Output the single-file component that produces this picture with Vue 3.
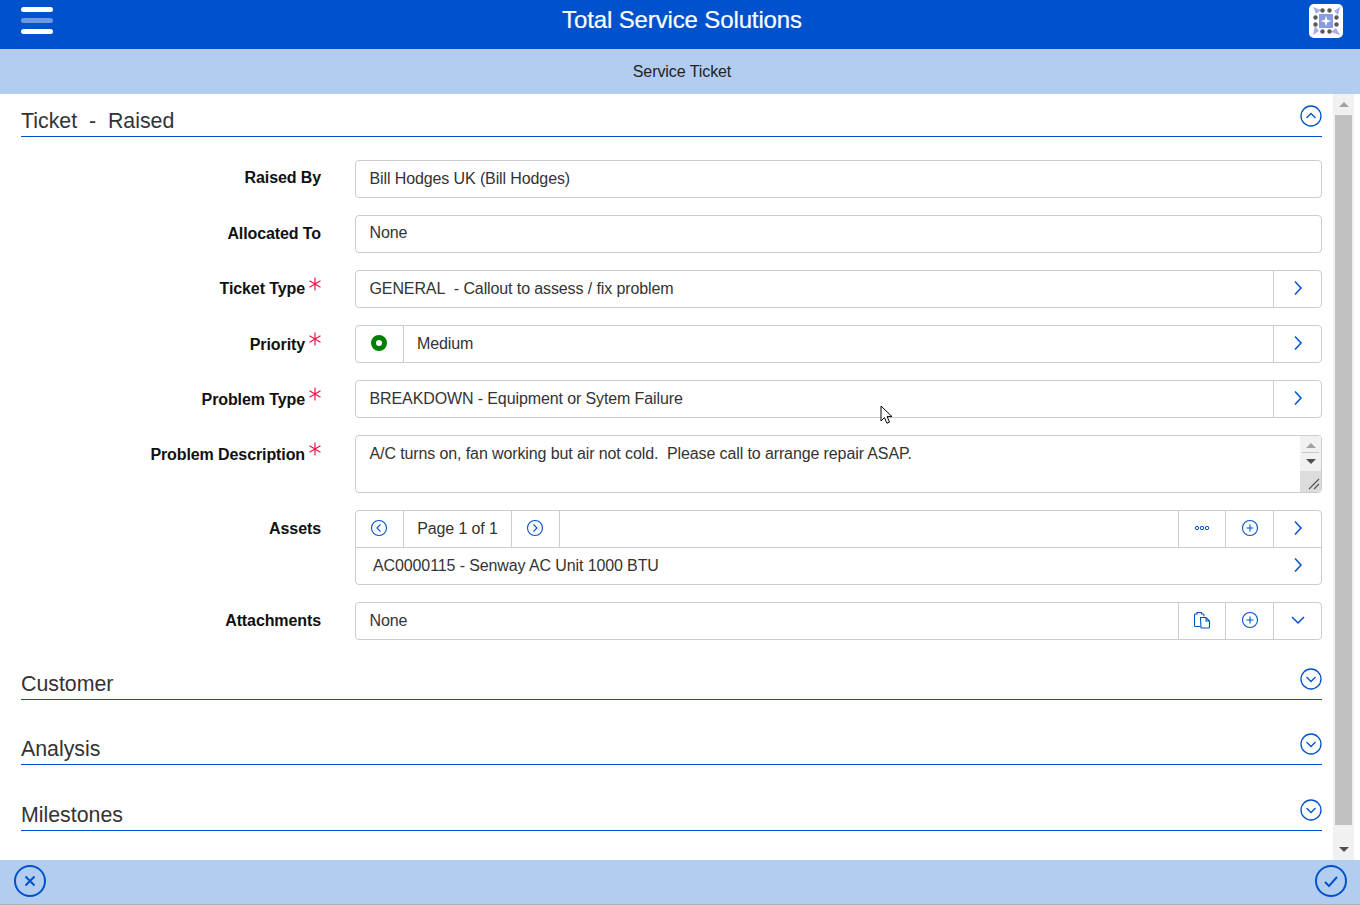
<script setup>
const sections = ['Customer', 'Analysis', 'Milestones']
</script>

<template>
  <div class="app">
    <header class="topbar">
      <div class="burger"><span></span><span class="dim"></span><span></span></div>
      <h1 class="brand">Total Service Solutions</h1>
      <div class="logo">
        <svg width="34" height="34" viewBox="0 0 34 34">
          <path d="M4 3l8 3-5 4zM31 3l-2 8-4-4zM31 31l-9-3 5-4zM4 31l2-9 4 5z" fill="#a3afe8" />
          <rect x="10" y="10" width="14" height="14" fill="#8b9be0" />
          <path d="M17 11.500l1.200 4.300 4.300 1.200-4.300 1.200-1.200 4.300-1.200-4.300-4.300-1.200 4.300-1.200z" fill="#fff" />
          <g fill="#5a5a5a">
            <circle cx="13.500" cy="6.500" r="2.200" /><circle cx="20.500" cy="6.500" r="2.200" />
            <circle cx="13.500" cy="27.500" r="2.200" /><circle cx="20.500" cy="27.500" r="2.200" />
            <circle cx="6.500" cy="13.500" r="2.200" /><circle cx="6.500" cy="20.500" r="2.200" />
            <circle cx="27.500" cy="13.500" r="2.200" /><circle cx="27.500" cy="20.500" r="2.200" />
          </g>
        </svg>
      </div>
    </header>
    <div class="subbar">Service Ticket</div>

    <main class="middle">
      <div class="content">
        <section class="section">
          <div class="head">
            <h2>Ticket&nbsp; -&nbsp; Raised</h2>
            <svg class="head-icon" width="22" height="22" viewBox="0 0 22 22"><circle cx="11" cy="11" r="10" /><path d="M6.500 13l4.500-4.500 4.500 4.500" /></svg>
          </div>
          <div class="form">
            <label class="label">Raised By</label>
            <div class="field"><div class="text">Bill Hodges UK (Bill Hodges)</div></div>

            <label class="label l1">Allocated To</label>
            <div class="field"><div class="text up">None</div></div>

            <label class="label l1 req">Ticket Type<svg class="star" width="14" height="14" viewBox="0 0 14 14"><path d="M7 .5v13M1.500 3.800l11 6.400M12.500 3.800l-11 6.400" /></svg></label>
            <div class="field">
              <div class="text">GENERAL&nbsp; - Callout to assess / fix problem</div>
              <div class="cell chev"><svg width="12" height="16" viewBox="0 0 12 16"><path d="M3 1.500l6 6.500-6 6.500" /></svg></div>
            </div>

            <label class="label l2 req">Priority<svg class="star" width="14" height="14" viewBox="0 0 14 14"><path d="M7 .5v13M1.500 3.800l11 6.400M12.500 3.800l-11 6.400" /></svg></label>
            <div class="field">
              <div class="cell dot"><i></i></div>
              <div class="text med">Medium</div>
              <div class="cell chev"><svg width="12" height="16" viewBox="0 0 12 16"><path d="M3 1.500l6 6.500-6 6.500" /></svg></div>
            </div>

            <label class="label l2 req">Problem Type<svg class="star" width="14" height="14" viewBox="0 0 14 14"><path d="M7 .5v13M1.500 3.800l11 6.400M12.500 3.800l-11 6.400" /></svg></label>
            <div class="field">
              <div class="text">BREAKDOWN - Equipment or Sytem Failure</div>
              <div class="cell chev"><svg width="12" height="16" viewBox="0 0 12 16"><path d="M3 1.500l6 6.500-6 6.500" /></svg></div>
            </div>

            <label class="label l2 req">Problem Description<svg class="star" width="14" height="14" viewBox="0 0 14 14"><path d="M7 .5v13M1.500 3.800l11 6.400M12.500 3.800l-11 6.400" /></svg></label>
            <div class="field area">
              <div class="text top">A/C turns on, fan working but air not cold.&nbsp; Please call to arrange repair ASAP.</div>
              <div class="area-bar">
                <div class="area-arrows">
                  <b class="tri up-tri"></b>
                  <hr />
                  <b class="tri down-tri"></b>
                </div>
                <div class="resizer">
                  <svg width="21" height="21" viewBox="0 0 21 21"><path d="M9 18L19 8M14 18l5-5" /></svg>
                </div>
              </div>
            </div>

            <label class="label l1">Assets</label>
            <div class="field stack">
              <div class="line">
                <div class="cell dot">
                  <svg class="ico" width="18" height="18" viewBox="0 0 18 18"><circle cx="9" cy="9" r="7.500" /><path d="M10.500 5.500L7 9l3.500 3.500" /></svg>
                </div>
                <div class="cell page">Page 1 of 1</div>
                <div class="cell nav">
                  <svg class="ico" width="18" height="18" viewBox="0 0 18 18"><circle cx="9" cy="9" r="7.500" /><path d="M7.500 5.500L11 9l-3.500 3.500" /></svg>
                </div>
                <div class="spacer"></div>
                <div class="cell act">
                  <svg class="ico thin" width="16" height="6" viewBox="0 0 16 6"><circle cx="3" cy="3" r="1.700" /><circle cx="8" cy="3" r="1.700" /><circle cx="13" cy="3" r="1.700" /></svg>
                </div>
                <div class="cell act2">
                  <svg class="ico" width="18" height="18" viewBox="0 0 18 18"><circle cx="9" cy="9" r="7.500" /><path d="M9 5.500v7M5.500 9h7" /></svg>
                </div>
                <div class="cell chev"><svg width="12" height="16" viewBox="0 0 12 16"><path d="M3 1.500l6 6.500-6 6.500" /></svg></div>
              </div>
              <div class="line second">
                <div class="text asset">AC0000115 - Senway AC Unit 1000 BTU</div>
                <div class="asset-chev"><svg width="12" height="16" viewBox="0 0 12 16"><path d="M3 1.500l6 6.500-6 6.500" /></svg></div>
              </div>
            </div>

            <label class="label l1">Attachments</label>
            <div class="field">
              <div class="text">None</div>
              <div class="cell act">
                <svg class="ico" width="18" height="18" viewBox="0 0 18 18"><path d="M7.500 15.500H2.500a1 1 0 0 1-1-1V4a1 1 0 0 1 1-1H4V1.500h4.500V3H10a1 1 0 0 1 1 1v1.500" /><path d="M7.500 6.500h5.500l3.500 3.500v6a1 1 0 0 1-1 1h-7a.5.500 0 0 1-.5-.5zM13 6.500V10h3.500" /></svg>
              </div>
              <div class="cell act2">
                <svg class="ico" width="18" height="18" viewBox="0 0 18 18"><circle cx="9" cy="9" r="7.500" /><path d="M9 5.500v7M5.500 9h7" /></svg>
              </div>
              <div class="cell chev"><svg width="16" height="12" viewBox="0 0 16 12"><path d="M2 3l6 6 6-6" /></svg></div>
            </div>
          </div>
        </section>

        <section v-for="name in sections" :key="name" class="section closed">
          <div class="head">
            <h2>{{ name }}</h2>
            <svg class="head-icon" width="22" height="22" viewBox="0 0 22 22"><circle cx="11" cy="11" r="10" /><path d="M6.500 9l4.500 4.500L15.500 9" /></svg>
          </div>
        </section>
      </div>

      <div class="scrollbar">
        <div class="sb-btn"><b class="sb-tri up-tri light"></b></div>
        <div class="sb-track"><div class="sb-thumb"></div></div>
        <div class="sb-btn"><b class="sb-tri down-tri"></b></div>
      </div>

      <svg class="cursor" width="14" height="21" viewBox="0 0 14 21">
        <path d="M1 1v15l3.500-3.400 2.400 5.600 2.600-1.100-2.400-5.500H12z" fill="#fff" stroke="#000" stroke-width="1" />
      </svg>
    </main>

    <footer class="footer">
      <svg class="foot-icon" width="32" height="32" viewBox="0 0 32 32"><circle cx="16" cy="16" r="15" /><path d="M11.500 11.500l9 9M20.500 11.500l-9 9" /></svg>
      <svg class="foot-icon" width="32" height="32" viewBox="0 0 32 32"><circle cx="16" cy="16" r="15" /><path d="M10 17l4 4 8-9" /></svg>
    </footer>
  </div>
</template>

<style>
html, body { margin: 0; background: #fff; overflow: hidden; }
</style>

<style scoped>
.app {
  width: 1360px;
  height: 905px;
  display: flex;
  flex-direction: column;
  font-family: "Liberation Sans", Arial, sans-serif;
  font-size: 16px;
  color: #333;
}
.topbar {
  height: 49px;
  flex: none;
  background: #0052cc;
  display: flex;
  align-items: center;
  justify-content: space-between;
  position: relative;
  padding: 0 17px 0 21px;
  box-sizing: border-box;
}
.burger { display: flex; flex-direction: column; gap: 6px; margin-top: -8px; }
.burger span { display: block; width: 32px; height: 5px; border-radius: 3px; background: #fff; }
.burger .dim { background: #6f98e0; }
.brand {
  position: absolute;
  left: 4px;
  right: 0;
  top: 5px;
  margin: 0;
  text-align: center;
  color: #fff;
  font-size: 24px;
  font-weight: 400;
  line-height: 30px;
  letter-spacing: -0.13px;
  -webkit-text-stroke: 0.2px #fff;
}
.logo { width: 34px; height: 34px; background: #fff; border-radius: 5px; margin-top: -7px; }
.logo svg { display: block; }
.subbar {
  height: 45px;
  flex: none;
  background: #b3cdf0;
  text-align: center;
  line-height: 45px;
  padding-left: 4px;
  letter-spacing: -0.08px;
  color: #222;
}
.middle { flex: 1; min-height: 0; display: flex; position: relative; padding-right: 6px; }
.content { flex: 1; min-width: 0; padding: 0 11px 0 21px; }
.head {
  height: 43px;
  box-sizing: border-box;
  border-bottom: 1.500px solid #0052cc;
  display: flex;
  justify-content: space-between;
  align-items: flex-start;
}
.head h2 {
  margin: 14px 0 0;
  font-size: 21.330px;
  font-weight: 400;
  line-height: 26px;
  color: #333;
}
.head-icon { margin: 11px 0 0; fill: none; stroke: #0052cc; stroke-width: 1.300; }
.section.closed { margin-bottom: 22.400px; }
.form {
  display: grid;
  grid-template-columns: 300px 967px;
  column-gap: 34px;
  row-gap: 17px;
  padding: 23px 0 17px;
}
.label {
  text-align: right;
  font-weight: 700;
  color: #111;
  line-height: 24px;
  padding-top: 6px;
  letter-spacing: -0.1px;
  position: relative;
}
.l1 { padding-top: 7px; }
.l2 { padding-top: 8px; }
.req { padding-right: 16px; }
.star {
  position: absolute;
  right: -1px;
  top: 7px;
  fill: none;
  stroke: #e8174a;
  stroke-width: 1.200;
}
.field {
  min-height: 38px;
  box-sizing: border-box;
  border: 1px solid #ccc;
  border-radius: 4px;
  display: flex;
  align-items: stretch;
  line-height: 36px;
  letter-spacing: -0.11px;
}
.text { flex: 1; min-width: 0; padding-left: 13.500px; white-space: nowrap; }
.text.up { line-height: 33px; }
.text.med { padding-left: 13px; }
.text.top { line-height: 35px; }
.cell {
  flex: none;
  display: flex;
  align-items: center;
  justify-content: center;
  border-left: 1px solid #ccc;
  box-sizing: border-box;
}
.cell svg, .asset-chev svg { fill: none; stroke: #0052cc; stroke-width: 1.500; margin-top: -2px; }
.chev { width: 48px; }
.dot { width: 48px; border-left: 0; border-right: 1px solid #ccc; }
.dot svg, .dot i, .nav svg { margin-left: -1px; }
.dot i {
  display: block;
  width: 16px;
  height: 16px;
  margin-top: -2px;
  box-sizing: border-box;
  border: 5px solid #008000;
  border-radius: 50%;
}
.page { width: 108px; border-left: 0; border-right: 1px solid #ccc; }
.nav { width: 48px; border-left: 0; border-right: 1px solid #ccc; }
.act { width: 47px; }
.act2 { width: 48px; }
.spacer { flex: 1; }
.cell .ico { stroke-width: 1.100; }
.cell .ico.thin { stroke-width: 1; }
.area { height: 58px; position: relative; overflow: hidden; }
.area-bar {
  width: 21px;
  flex: none;
  background: #f1f1f1;
  display: flex;
  flex-direction: column;
}
.area-arrows { flex: 1; display: flex; flex-direction: column; align-items: center; padding-top: 7px; }
.area-arrows hr { width: 17px; margin: 4px 0 6px; border: 0; border-top: 1px solid #c8c8c8; }
.tri { display: block; width: 0; height: 0; border-left: 5px solid transparent; border-right: 5px solid transparent; }
.up-tri { border-bottom: 5px solid #a3a3a3; }
.down-tri { border-top: 5px solid #505050; }
.resizer { height: 21px; background: #dcdcdc; }
.resizer svg { display: block; fill: none; stroke: #555; stroke-width: 1.200; }
.stack { flex-direction: column; height: 75px; }
.line { height: 36px; display: flex; align-items: stretch; flex: none; }
.line.second { height: 37px; border-top: 1px solid #ccc; box-sizing: border-box; }
.asset { padding-left: 17px; }
.asset-chev { width: 46px; flex: none; display: flex; align-items: center; justify-content: center; }
.scrollbar {
  width: 21px;
  flex: none;
  background: #f1f1f1;
  display: flex;
  flex-direction: column;
  align-items: center;
}
.sb-btn { height: 21px; flex: none; display: flex; align-items: center; justify-content: center; }
.sb-tri { display: block; width: 0; height: 0; border-left: 5px solid transparent; border-right: 5px solid transparent; }
.up-tri.light { border-bottom-color: #a3a3a3; }
.sb-track { flex: 1; width: 17px; padding-bottom: 14px; display: flex; }
.sb-thumb { flex: 1; background: #c1c1c1; }
.cursor { position: absolute; left: 880px; top: 311px; }
.footer {
  height: 45px;
  flex: none;
  box-sizing: border-box;
  background: #b3cdf0;
  border-bottom: 1px solid #b0b0b0;
  display: flex;
  align-items: center;
  justify-content: space-between;
  padding: 0 13px 2px 14px;
}
.foot-icon { fill: none; stroke: #0052cc; stroke-width: 2; }
</style>
